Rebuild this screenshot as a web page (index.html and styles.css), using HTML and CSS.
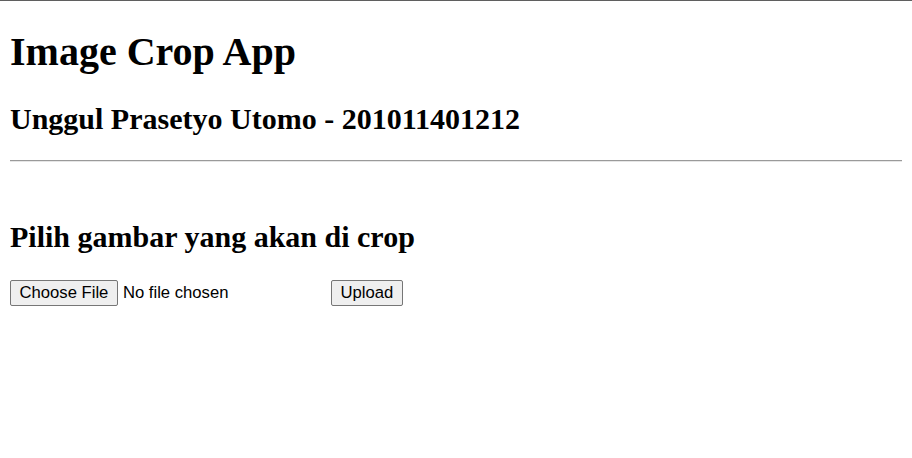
FILE: index.html
```html
<!DOCTYPE html>
<html>
<head>
<meta charset="utf-8">
<title>Image Crop App</title>
<link rel="stylesheet" href="styles.css">
</head>
<body class="page">
<h1 class="title">Image Crop App</h1>
<h2 class="subtitle">Unggul Prasetyo Utomo - 201011401212</h2>
<div class="divider"></div>
<br>
<h2 class="subtitle">Pilih gambar yang akan di crop</h2>
<form class="upload-form" onsubmit="return false">
<input class="file-input" type="file" name="image"> <input class="btn" type="submit" value="Upload">
</form>
</body>
</html>
```
FILE: styles.css
```css
html {
  border-top: 1px solid #5f5f5f;
  background: #fff;
  overflow: hidden;
}
.page {
  margin: 0 10px;
  font-family: "Liberation Serif", "Times New Roman", serif;
  font-size: 20px;
  color: #000;
}
.title {
  font-size: 40px;
  font-weight: bold;
  margin: 26.8px 0;
}
.subtitle {
  font-size: 30px;
  font-weight: bold;
  margin: 24.9px 0;
}
.divider {
  width: 100vw;
  height: 1px;
  margin: 10px 0;
  background: #9a9a9a;
  border-bottom: 1px solid #e6e6e6;
}
.upload-form {
  font-size: 20px;
}
.file-input {
  font-family: "Liberation Sans", Arial, sans-serif;
  font-size: 16.667px;
  margin: 0;
  width: 316px;
  vertical-align: middle;
}
.file-input::file-selector-button {
  font-family: "Liberation Sans", Arial, sans-serif;
  font-size: 16.667px;
  margin: 0 5px 0 0;
  padding: 2px 8.5px;
  border: 1px solid #767676;
  border-radius: 2px;
  background: #efefef;
  color: #000;
}
.btn {
  font-family: "Liberation Sans", Arial, sans-serif;
  font-size: 16.667px;
  margin: 0;
  padding: 2px 8.5px;
  border: 1px solid #767676;
  border-radius: 2px;
  background: #efefef;
  color: #000;
  vertical-align: middle;
}
```
